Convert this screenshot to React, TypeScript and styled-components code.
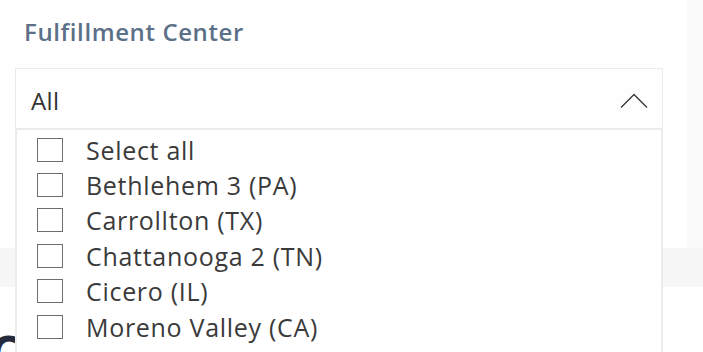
import React, { useState } from 'react';
import styled, { createGlobalStyle } from 'styled-components';

const centers = [
  'Select all',
  'Bethlehem 3 (PA)',
  'Carrollton (TX)',
  'Chattanooga 2 (TN)',
  'Cicero (IL)',
  'Moreno Valley (CA)',
];

const GlobalStyle = createGlobalStyle`
  html, body {
    margin: 0;
    padding: 0;
    background: #ffffff;
    overflow: hidden;
  }
  * { box-sizing: border-box; }
`;

const App: React.FC = () => {
  const [checked, setChecked] = useState<string[]>([]);

  const toggle = (name: string) => {
    setChecked((prev) => (prev.includes(name) ? prev.filter((n) => n !== name) : [...prev, name]));
  };

  return (
    <Page>
      <GlobalStyle />
      <TopRow>
        <SlicerCard>
          <SlicerTitle>Fulfillment Center</SlicerTitle>
          <DropHeader>
            <DropValue>All</DropValue>
            <svg width="28" height="16" viewBox="0 0 28 16">
              <polyline points="1,14.5 14,1.5 27,14.5" fill="none" stroke="#3a3a3a" strokeWidth="1.4" />
            </svg>
          </DropHeader>
        </SlicerCard>
        <SideStrip />
      </TopRow>
      <Gutter />
      <NextCard>
        <NextTitle>C</NextTitle>
      </NextCard>

      <DropList>
        {centers.map((c) => (
          <Item key={c} onClick={() => toggle(c)}>
            <Box checked={checked.includes(c)} />
            <ItemLabel>{c}</ItemLabel>
          </Item>
        ))}
      </DropList>
    </Page>
  );
};

const Page = styled.div`
  position: relative;
  width: 703px;
  height: 352px;
  overflow: hidden;
  background: #ffffff;
  display: flex;
  flex-direction: column;
  font-family: "Open Sans", "Noto Sans", sans-serif;
`;

const TopRow = styled.div`
  display: flex;
  height: 248px;
  flex-shrink: 0;
`;

const SlicerCard = styled.div`
  width: 687px;
  background: #ffffff;
  padding: 14px 0 0 15px;
  display: flex;
  flex-direction: column;
`;

const SideStrip = styled.div`
  flex: 1;
  background: #fafafa;
`;

const SlicerTitle = styled.div`
  padding-left: 9px;
  font-size: 24px;
  font-weight: 600;
  color: #5c7088;
  line-height: 36px;
  height: 54px;
  letter-spacing: 0.6px;
`;

const DropHeader = styled.div`
  width: 648px;
  height: 61px;
  border: 1.5px solid #ebebeb;
  background: #fefefe;
  display: flex;
  align-items: center;
  justify-content: space-between;
  padding: 4px 14px 0 15px;
`;

const DropValue = styled.span`
  font-size: 24px;
  color: #333333;
  letter-spacing: 0.4px;
`;

const Gutter = styled.div`
  height: 39px;
  flex-shrink: 0;
  background: #f6f6f6;
`;

const NextCard = styled.div`
  flex: 1 0 auto;
  background: #ffffff;
`;

const NextTitle = styled.div`
  margin: 42px 0 0 -10px;
  font-size: 48px;
  font-weight: 700;
  color: #252a3c;
  line-height: 1;
`;

const DropList = styled.div`
  position: absolute;
  left: 15px;
  top: 129px;
  width: 648px;
  height: 240px;
  background: #ffffff;
  border-left: 2px solid #ececec;
  border-right: 2px solid #ececec;
  border-top: 1.5px solid #ebebeb;
  padding: 2px 0 0 20px;
  display: flex;
  flex-direction: column;
`;

const Item = styled.div`
  display: flex;
  align-items: center;
  height: 35.4px;
  cursor: pointer;
`;

const Box = styled.span<{ checked: boolean }>`
  width: 26px;
  height: 24px;
  border: 1.6px solid #6e6e6e;
  background: ${(p) => (p.checked ? '#333' : '#fff')};
  flex-shrink: 0;
`;

const ItemLabel = styled.span`
  margin-left: 23px;
  font-size: 25px;
  line-height: 30px;
  color: #3a3a3a;
  white-space: nowrap;
  letter-spacing: 0.7px;
`;

export default App;
